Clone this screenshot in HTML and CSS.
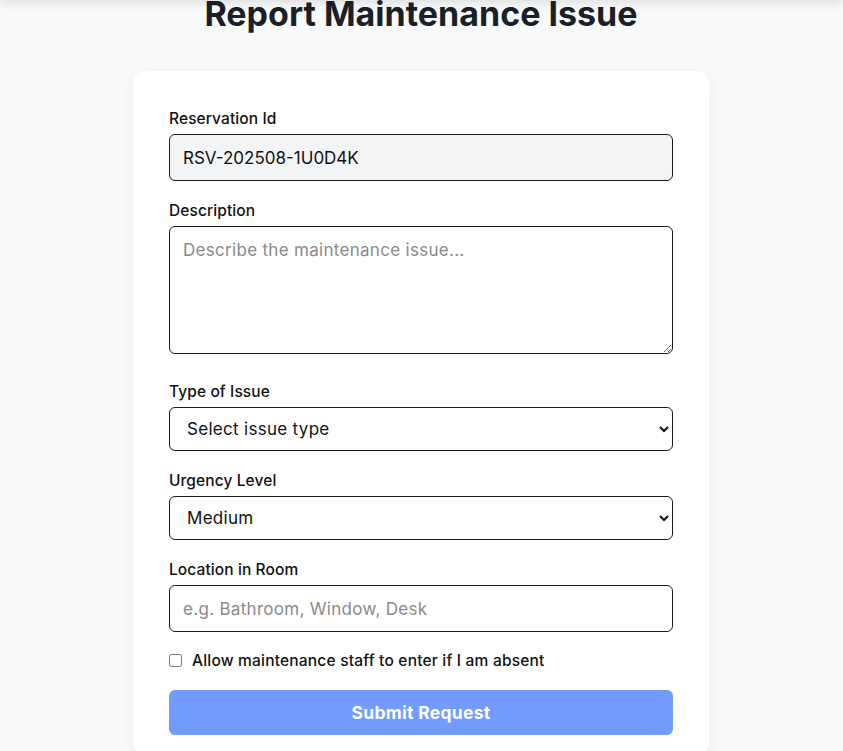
FILE: index.html
```html
<!DOCTYPE html>
<html lang="en">
<head>
<meta charset="utf-8">
<title>Report Maintenance Issue</title>
<link rel="stylesheet" href="styles.css">
</head>
<body>
<div class="topbar"></div>
<main class="page">
  <h1 class="title">Report Maintenance Issue</h1>
  <form class="card">
    <div class="field">
      <label class="label" for="rid">Reservation Id</label>
      <input class="control readonly" id="rid" type="text" value="RSV-202508-1U0D4K" readonly>
    </div>
    <div class="field field-area">
      <label class="label" for="desc">Description</label>
      <textarea class="control area" id="desc" placeholder="Describe the maintenance issue..."></textarea>
    </div>
    <div class="field">
      <label class="label" for="type">Type of Issue</label>
      <select class="control select" id="type">
        <option>Select issue type</option>
      </select>
    </div>
    <div class="field">
      <label class="label" for="urg">Urgency Level</label>
      <select class="control select" id="urg">
        <option>Medium</option>
      </select>
    </div>
    <div class="field">
      <label class="label" for="loc">Location in Room</label>
      <input class="control" id="loc" type="text" placeholder="e.g. Bathroom, Window, Desk">
    </div>
    <label class="check">
      <input type="checkbox" class="checkbox">
      <span>Allow maintenance staff to enter if I am absent</span>
    </label>
    <button type="button" class="submit">Submit Request</button>
  </form>
</main>
</body>
</html>
```
FILE: styles.css
```css
* { box-sizing: border-box; }
html, body { margin: 0; padding: 0; }
body {
  background: #f8f9fb;
  font-family: Inter, "Liberation Sans", sans-serif;
  color: #111;
  overflow: hidden;
}
.topbar {
  position: fixed;
  top: -40px;
  left: 0;
  right: 0;
  height: 40px;
  box-shadow: 0 2px 10px rgba(0,0,0,0.12);
}
.page {
  display: flex;
  flex-direction: column;
  align-items: center;
  padding-right: 1px;
}
.title {
  margin: -6px 0 0;
  font-size: 34px;
  line-height: 40px;
  font-weight: 700;
  color: #1b1f27;
  letter-spacing: 0;
}
.card {
  margin-top: 37px;
  width: 576px;
  background: #fff;
  border-radius: 12px;
  box-shadow: 0 4px 14px rgba(0,0,0,0.05);
  padding: 36px 36px 20px;
}
.field { margin-bottom: 18px; }
.field-area { margin-bottom: 26px; }
.label {
  display: block;
  font-size: 15.5px;
  line-height: 22px;
  font-weight: 500;
  padding-top: 1px;
  margin-bottom: 4px;
  color: #111;
  letter-spacing: 0.1px;
}
.control {
  display: block;
  width: 100%;
  height: 47px;
  border: 1px solid #1a1a1a;
  border-radius: 6px;
  background: #fff;
  font-family: inherit;
  font-size: 17px;
  letter-spacing: 0.3px;
  color: #111;
  padding: 0 13px;
  outline: none;
}
.control::placeholder { color: #8a8a8a; }
.readonly { background: #f3f4f6; letter-spacing: 0; }
.area {
  height: 128px;
  padding: 11px 13px;
  resize: vertical;
  line-height: 24px;
}
.select {
  height: 44px;
  padding: 0 12px 0 13px;
}
.check {
  display: flex;
  align-items: center;
  gap: 10px;
  font-size: 15.5px;
  font-weight: 500;
  letter-spacing: 0.2px;
  margin-top: -4px;
  height: 28px;
}
.checkbox {
  width: 13px;
  height: 13px;
  margin: 0;
}
.submit {
  display: block;
  width: 100%;
  height: 45px;
  margin-top: 16px;
  border: none;
  border-radius: 6px;
  background: #719cfd;
  color: #fff;
  font-family: inherit;
  font-size: 17.5px;
  font-weight: 700;
  letter-spacing: 0.3px;
}
```
